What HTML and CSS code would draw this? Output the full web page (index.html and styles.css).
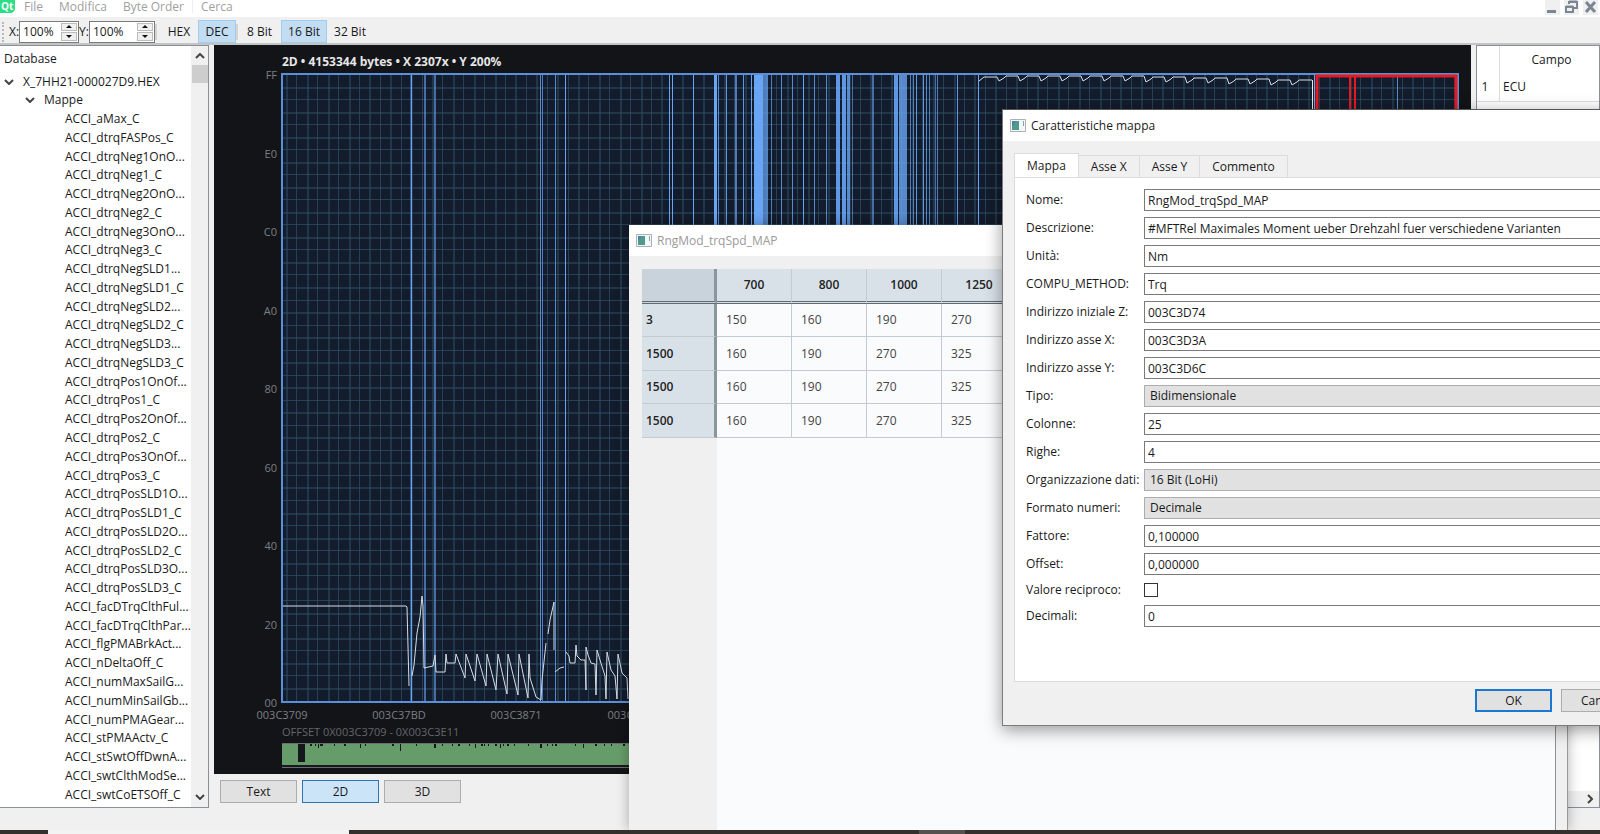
FILE: index.html
```html
<!DOCTYPE html>
<html lang="it">
<head>
  <meta charset="UTF-8">
  <title>X_7HH21-000027D9.HEX</title>
  <link rel="stylesheet" href="styles.css">
</head>
<body>
  <header id="menu-bar">
    <svg class="qt-logo" width="15" height="13" viewBox="0 0 15 13">
      <path d="M0 0h15v10l-3 3H0z" fill="#2cde85"/>
      <text x="1" y="10">Qt</text>
    </svg>
    <nav>
      <a href="#">File</a>
      <a href="#">Modifica</a>
      <a href="#">Byte Order</a>
      <a href="#" class="last">Cerca</a>
    </nav>
    <div class="window-buttons">
      <button aria-label="Minimize"><svg width="15" height="15" viewBox="0 0 15 15"><path d="M2 11.500h9" stroke="#7b8794" stroke-width="3"/></svg></button>
      <button aria-label="Restore"><svg width="15" height="15" viewBox="0 0 15 15"><path d="M5 4V2h8v6h-3M5 1.500h8M2 7h7v5H2zM2 6.500h7" fill="none" stroke="#7b8794" stroke-width="2"/></svg></button>
      <button aria-label="Close"><svg width="15" height="15" viewBox="0 0 15 15"><path d="M3 2l9 10M12 2L3 12" stroke="#7b8794" stroke-width="3"/></svg></button>
    </div>
  </header>

  <div id="toolbar">
    <span class="grip"></span>
    <label for="zoom-x">X:</label>
    <div class="spin">
      <input type="text" id="zoom-x" value="100%">
      <div class="spin-buttons"><button class="up" aria-label="X up"></button><button class="down" aria-label="X down"></button></div>
    </div>
    <label for="zoom-y">Y:</label>
    <div class="spin wide">
      <input type="text" id="zoom-y" value="100%">
      <div class="spin-buttons"><button class="up" aria-label="Y up"></button><button class="down" aria-label="Y down"></button></div>
    </div>
    <span class="sep first"></span>
    <button>HEX</button>
    <button class="active">DEC</button>
    <span class="sep"></span>
    <button class="bits">8 Bit</button>
    <button class="active wide">16 Bit</button>
    <button>32 Bit</button>
  </div>

  <main id="workspace">
    <aside id="tree-pane">
      <div class="tree">
        <div class="tree-title">Database</div>
        <div class="node root"><svg width="10" height="6" viewBox="0 0 10 6"><path d="M1 1l4 4 4-4"/></svg>X_7HH21-000027D9.HEX</div>
        <div class="node group"><svg width="10" height="6" viewBox="0 0 10 6"><path d="M1 1l4 4 4-4"/></svg>Mappe</div>
        <ul id="map-list"></ul>
      </div>
      <div class="scrollbar">
        <svg width="10" height="6" viewBox="0 0 10 6"><path d="M1 5l4-4 4 4"/></svg>
        <span class="thumb"></span>
        <svg class="end" width="10" height="6" viewBox="0 0 10 6"><path d="M1 1l4 4 4-4"/></svg>
      </div>
    </aside>

    <section id="center-pane">
      <div class="chart-box"><svg id="chart"></svg></div>
      <div class="view-buttons">
        <button>Text</button>
        <button class="active">2D</button>
        <button>3D</button>
      </div>
    </section>

    <aside id="field-pane">
      <table>
        <thead><tr><th></th><th>Campo</th></tr></thead>
        <tbody><tr><td class="num">1</td><td>ECU</td></tr></tbody>
      </table>
      <div class="hscroll"><svg width="6" height="10" viewBox="0 0 6 10"><path d="M1 1l4 4-4 4"/></svg></div>
    </aside>
  </main>

  <footer id="taskbar"><span class="task-search"></span><span class="task-active"></span></footer>

  <!-- Map table window -->
  <section id="map-window" class="window">
    <div class="title-bar">
      <svg width="16" height="13" viewBox="0 0 16 13"><path d="M.5.5h15v12H.5z" fill="#f4f6f7" stroke="#aab2b8"/><path d="M2 2h7v9H2z" fill="#4f9a8c"/><path d="M2 2h4l-4 5z" fill="#4e7fa8"/><path d="M13 2h1v5h-1z" fill="#6fb0a0"/></svg>
      RngMod_trqSpd_MAP
    </div>
    <div class="map-body">
      <table class="map-table">
        <thead><tr><th></th><th>700</th><th>800</th><th>1000</th><th>1250</th></tr></thead>
        <tbody>
          <tr><th>3</th><td>150</td><td>160</td><td>190</td><td>270</td></tr>
          <tr><th>1500</th><td>160</td><td>190</td><td>270</td><td>325</td></tr>
          <tr><th>1500</th><td>160</td><td>190</td><td>270</td><td>325</td></tr>
          <tr><th>1500</th><td>160</td><td>190</td><td>270</td><td>325</td></tr>
        </tbody>
      </table>
    </div>
  </section>

  <!-- Map properties dialog -->
  <section id="props-window" class="window">
    <div class="title-bar">
      <svg width="16" height="13" viewBox="0 0 16 13"><path d="M.5.5h15v12H.5z" fill="#f4f6f7" stroke="#aab2b8"/><path d="M2 2h7v9H2z" fill="#4f9a8c"/><path d="M2 2h4l-4 5z" fill="#4e7fa8"/><path d="M13 2h1v5h-1z" fill="#6fb0a0"/></svg>
      Caratteristiche mappa
    </div>
    <div class="tabs">
      <button class="active">Mappa</button>
      <button>Asse X</button>
      <button>Asse Y</button>
      <button>Commento</button>
    </div>
    <form class="props-form">
      <label for="nome">Nome:</label><input type="text" id="nome" value="RngMod_trqSpd_MAP">
      <label for="descrizione">Descrizione:</label><input type="text" id="descrizione" value="#MFTRel Maximales Moment ueber Drehzahl fuer verschiedene Varianten">
      <label for="unita">Unità:</label><input type="text" id="unita" value="Nm">
      <label for="compu">COMPU_METHOD:</label><input type="text" id="compu" value="Trq">
      <label for="addr-z">Indirizzo iniziale Z:</label><input type="text" id="addr-z" value="003C3D74">
      <label for="addr-x">Indirizzo asse X:</label><input type="text" id="addr-x" value="003C3D3A">
      <label for="addr-y">Indirizzo asse Y:</label><input type="text" id="addr-y" value="003C3D6C">
      <label for="tipo">Tipo:</label><select id="tipo"><option>Bidimensionale</option></select>
      <label for="colonne">Colonne:</label><input type="text" id="colonne" value="25">
      <label for="righe">Righe:</label><input type="text" id="righe" value="4">
      <label for="org">Organizzazione dati:</label><select id="org"><option>16 Bit (LoHi)</option></select>
      <label for="formato">Formato numeri:</label><select id="formato"><option>Decimale</option></select>
      <label for="fattore">Fattore:</label><input type="text" id="fattore" value="0,100000">
      <label for="offset">Offset:</label><input type="text" id="offset" value="0,000000">
      <label for="reciproco">Valore reciproco:</label><input type="checkbox" id="reciproco">
      <label for="decimali">Decimali:</label><input type="text" id="decimali" value="0">
    </form>
    <div class="dialog-buttons">
      <button class="default">OK</button>
      <button>Cancel</button>
    </div>
  </section>

  <script src="chart.js"></script>
</body>
</html>
```
FILE: styles.css
```css
html, body {
  margin: 0;
  padding: 0;
  height: 100%;
}
body {
  display: flex;
  flex-direction: column;
  position: relative;
  overflow: hidden;
  background: #f0f0f0;
  color: #1a1a1a;
  font-family: "Open Sans", "Noto Sans", sans-serif;
  font-size: 12px;
  line-height: 18px;
}
button, input, select {
  font: inherit;
  color: inherit;
  margin: 0;
  box-sizing: border-box;
}
table {
  border-collapse: separate;
  border-spacing: 0;
}

/* Menu bar */
#menu-bar {
  display: flex;
  align-items: flex-start;
  height: 17px;
  background: #fff;
}
.qt-logo text {
  fill: #fff;
  font-size: 10px;
  font-weight: bold;
}
#menu-bar nav {
  display: flex;
  flex: 1;
  padding-left: 1px;
  line-height: 13px;
}
#menu-bar a {
  padding: 0 8px;
  color: #a0a0a0;
  text-decoration: none;
}
#menu-bar a.last {
  border-left: 1px solid #eee;
}
.window-buttons {
  display: flex;
  gap: 4px;
  padding-right: 2px;
}
.window-buttons button {
  width: 15px;
  height: 15px;
  padding: 0;
  border: 0;
  background: #f0f0f0;
}
.window-buttons svg {
  display: block;
}

/* Toolbar */
#toolbar {
  display: flex;
  align-items: center;
  height: 23px;
  padding: 3px 2px 0;
  border-bottom: 2px solid #c4c4c4;
}
.grip {
  width: 2px;
  height: 20px;
  margin-right: 3px;
  border-left: 2px dotted #bbb;
}
.spin {
  display: flex;
  width: 60px;
  height: 22px;
  box-sizing: border-box;
  border: 1px solid #7a7a7a;
  background: #fff;
}
.spin.wide {
  width: 66px;
}
.spin input {
  flex: 1;
  min-width: 0;
  padding: 0 3px;
  border: 0;
  background: none;
}
.spin-buttons {
  display: flex;
  flex-direction: column;
  width: 16px;
  gap: 1px;
  padding: 1px;
}
.spin-buttons button {
  display: flex;
  flex: 1;
  align-items: center;
  justify-content: center;
  padding: 0;
  border: 1px solid #bcbcbc;
  background: #f0f0f0;
}
.spin-buttons button::before {
  content: "";
  border: 3px solid transparent;
}
.spin-buttons .up::before {
  border-top: 0;
  border-bottom-color: #111;
}
.spin-buttons .down::before {
  border-bottom: 0;
  border-top-color: #111;
}
.sep {
  width: 2px;
  height: 16px;
  background: #d4d4d4;
}
.sep.first {
  margin-right: 3px;
}
#toolbar > button {
  min-width: 38px;
  height: 23px;
  padding: 0 6px;
  border: 1px solid transparent;
  background: none;
  white-space: nowrap;
}
#toolbar > button.bits {
  padding: 0 8px;
}
#toolbar > button.active {
  border-color: #9fcdf1;
  background: #c2dcf2;
}
#toolbar > button.wide {
  min-width: 46px;
}

/* Workspace */
#workspace {
  display: flex;
  flex: 1;
  gap: 5px;
  min-height: 0;
}
#tree-pane {
  display: flex;
  width: 209px;
  box-sizing: border-box;
  margin-bottom: 22px;
  border: 1px solid #8a8f99;
  border-left: 0;
  background: #fff;
}
.tree {
  display: flex;
  flex: 1;
  flex-direction: column;
  min-width: 0;
  padding-top: 4px;
}
.tree-title {
  padding-left: 4px;
}
.node {
  display: flex;
  align-items: center;
}
.node.root {
  gap: 9px;
  padding: 5px 0 0 4px;
}
.node.group {
  gap: 9px;
  padding: 0 0 0 25px;
}
#workspace .node svg, .scrollbar svg, .hscroll svg {
  fill: none;
  stroke: #444;
  stroke-width: 2;
}
#map-list {
  display: flex;
  flex: 1;
  flex-direction: column;
  justify-content: space-between;
  margin: 0;
  padding: 1px 0 3px 65px;
  list-style: none;
  white-space: nowrap;
}
.scrollbar {
  display: flex;
  flex-direction: column;
  align-items: center;
  width: 17px;
  padding: 7px 0;
  background: #f0f0f0;
}
.scrollbar .thumb {
  width: 16px;
  height: 18px;
  margin-top: 6px;
  background: #cdcdcd;
}
.scrollbar .end {
  margin-top: auto;
}
#center-pane {
  display: flex;
  flex: 1;
  flex-direction: column;
  min-width: 0;
}
.chart-box {
  flex: 1;
  min-height: 0;
  background: #131417;
}
#chart {
  display: block;
  width: 100%;
  height: 100%;
}
.view-buttons {
  display: flex;
  gap: 5px;
  padding: 6px 5px 27px 6px;
}
.view-buttons button, .dialog-buttons button {
  width: 77px;
  height: 23px;
  padding: 0;
  border: 1px solid #adadad;
  background: #e1e1e1;
}
.view-buttons .active {
  border-color: #2a74b8;
  background: #cce4f7;
}

/* Chart texts and lines */
.chart-title {
  fill: #e6e6e6;
  font-weight: bold;
}
.axis-text {
  fill: #7c7f85;
  font-size: 11px;
}
.axis-text.y {
  text-anchor: end;
}
.axis-text.x {
  text-anchor: middle;
}
.axis-text.offset {
  fill: #63666c;
}
.wave {
  fill: none;
  stroke: #d5dde6;
}

/* Field pane */
#field-pane {
  display: flex;
  flex-direction: column;
  justify-content: space-between;
  width: 124px;
  box-sizing: border-box;
  margin-bottom: 22px;
  border: 1px solid #8a8f99;
  background: #fff;
}
#field-pane table {
  width: 100%;
}
#field-pane th {
  height: 27px;
  padding: 0;
  font-weight: normal;
}
#field-pane th:last-child {
  padding-left: 4px;
}
#field-pane td {
  height: 28px;
  padding: 0 3px;
  border-bottom: 1px solid #dcdcdc;
}
#field-pane th:first-child, #field-pane td.num {
  width: 22px;
  padding: 0;
  border-right: 1px solid #dcdcdc;
  text-align: center;
}
#field-pane td.num {
  padding-right: 6px;
  width: 16px;
}
.hscroll {
  display: flex;
  align-items: center;
  justify-content: flex-end;
  height: 16px;
  padding-right: 6px;
  background: #f0f0f0;
}

/* Taskbar */
#taskbar {
  display: flex;
  height: 4px;
  padding-left: 48px;
  background: #33302e;
}
.task-search {
  width: 301px;
  background: #f3f3f3;
}
.task-active {
  width: 46px;
  margin-left: 570px;
  background: #55524f;
}

/* Windows */
.window {
  position: absolute;
  display: flex;
  flex-direction: column;
  box-sizing: border-box;
  background: #f0f0f0;
}
.title-bar {
  display: flex;
  align-items: center;
  gap: 5px;
  height: 31px;
  padding-left: 7px;
  background: #fff;
}
#map-window {
  left: 629px;
  top: 225px;
  bottom: 4px;
  width: 939px;
  border-right: 1px solid #9a9a9a;
  box-shadow: 0 0 12px rgba(0, 0, 0, 0.3);
  clip-path: inset(-20px -20px 0 -20px);
}
#map-window .title-bar {
  color: #999;
}
.map-body {
  flex: 1;
  margin: 13px 11px 0 13px;
  border-right: 1px solid #8a8f99;
  background: linear-gradient(90deg, #f0f0f0 75px, #fafbfd 75px);
}
.map-table {
  table-layout: fixed;
  width: 375px;
}
.map-table th, .map-table td {
  height: 33px;
  box-sizing: border-box;
  padding: 0 9px;
  border-right: 1px solid #c4cad1;
  border-bottom: 1px solid #c4cad1;
  background: #fafbfd;
  color: #444;
  text-align: left;
}
.map-table tbody tr:nth-child(even) > * {
  height: 34px;
}
.map-table th {
  padding: 0 4px;
  background: #d9e1e8;
  color: #222;
  font-weight: 600;
}
.map-table thead th {
  height: 35px;
  border-bottom: 3px double #5f6b73;
  text-align: center;
}
.map-table tr th:first-child {
  border-right: 3px solid #8b959d;
}
.map-table thead th:first-child {
  background: #c8d3db;
}

#props-window {
  left: 1002px;
  top: 109px;
  width: 646px;
  border: 1px solid #7c7c7c;
  border-top-color: #555;
  box-shadow: 0 4px 16px rgba(0, 0, 0, 0.4);
}
.tabs {
  display: flex;
  align-items: flex-end;
  margin: 12px 0 0 11px;
}
.tabs button {
  height: 22px;
  padding: 0 12px;
  border: 1px solid #dcdcdc;
  border-bottom: 0;
  border-left: 0;
  background: #f0f0f0;
}
.tabs button.active {
  height: 24px;
  border-left: 1px solid #dcdcdc;
  background: #fff;
}
.props-form {
  display: grid;
  grid-template-columns: 112px 1fr;
  align-items: center;
  gap: 6px;
  margin: 0 10px 0 11px;
  padding: 11px 11px 54px;
  border: 1px solid #dcdcdc;
  background: #fff;
}
.props-form label {
  white-space: nowrap;
}
.props-form input[type="text"], .props-form select {
  width: 100%;
  height: 22px;
  padding: 0 3px;
  border: 1px solid #7a7a7a;
  border-radius: 0;
  background: #fff;
}
.props-form select {
  appearance: none;
  padding: 0 5px;
  border-color: #adadad;
  background: #e1e1e1;
}
.props-form input[type="checkbox"] {
  appearance: none;
  width: 14px;
  height: 14px;
  border: 1px solid #333;
  background: #fff;
}
.dialog-buttons {
  display: flex;
  justify-content: flex-end;
  gap: 9px;
  padding: 7px 9px 13px;
}
.dialog-buttons .default {
  border: 2px solid #1a78d2;
}
```
FILE: chart.js
```js
const mapNames = [
  "ACCI_aMax_C", "ACCI_dtrqFASPos_C", "ACCI_dtrqNeg1OnO...", "ACCI_dtrqNeg1_C",
  "ACCI_dtrqNeg2OnO...", "ACCI_dtrqNeg2_C", "ACCI_dtrqNeg3OnO...", "ACCI_dtrqNeg3_C",
  "ACCI_dtrqNegSLD1...", "ACCI_dtrqNegSLD1_C", "ACCI_dtrqNegSLD2...", "ACCI_dtrqNegSLD2_C",
  "ACCI_dtrqNegSLD3...", "ACCI_dtrqNegSLD3_C", "ACCI_dtrqPos1OnOf...", "ACCI_dtrqPos1_C",
  "ACCI_dtrqPos2OnOf...", "ACCI_dtrqPos2_C", "ACCI_dtrqPos3OnOf...", "ACCI_dtrqPos3_C",
  "ACCI_dtrqPosSLD1O...", "ACCI_dtrqPosSLD1_C", "ACCI_dtrqPosSLD2O...", "ACCI_dtrqPosSLD2_C",
  "ACCI_dtrqPosSLD3O...", "ACCI_dtrqPosSLD3_C", "ACCI_facDTrqClthFul...", "ACCI_facDTrqClthPar...",
  "ACCI_flgPMABrkAct...", "ACCI_nDeltaOff_C", "ACCI_numMaxSailG...", "ACCI_numMinSailGb...",
  "ACCI_numPMAGear...", "ACCI_stPMAActv_C", "ACCI_stSwtOffDwnA...", "ACCI_swtClthModSe...",
  "ACCI_swtCoETSOff_C"
];

const listEl = document.getElementById("map-list");
mapNames.forEach(name => {
  const li = document.createElement("li");
  li.textContent = name;
  listEl.appendChild(li);
});

// Plot area inside the chart
const plot = { x: 68, y: 29, w: 1176, h: 628 };
let out = "";

function rect(x, y, w, h, fill, opacity = 1) {
  out += `<rect x="${x}" y="${y}" width="${w}" height="${h}" fill="${fill}" opacity="${opacity}"/>`;
}

function text(x, y, cls, value) {
  out += `<text x="${x}" y="${y}" class="${cls}">${value}</text>`;
}

text(plot.x, 21, "chart-title", "2D • 4153344 bytes • X 2307x • Y 200%");
["FF", "E0", "C0", "A0", "80", "60", "40", "20", "00"].forEach((v, i) => {
  text(63, Math.round(34 + i * plot.h / 8), "axis-text y", v);
});
["003C3709", "003C37BD", "003C3871", "003C3925"].forEach((v, i) => {
  text(68 + i * 117, 674, "axis-text x", v);
});
text(plot.x, 691, "axis-text offset", "OFFSET 0X003C3709 - 0X003C3E11");

out += `<g transform="translate(${plot.x} ${plot.y})">`;
rect(0, 0, plot.w, plot.h, "#131c2c");

// Grid
for (let i = 0; i * 10.43 + 4 < plot.w; i++) {
  rect(Math.round(4 + i * 10.43), 0, i % 2 ? 1 : 2, plot.h, "#305064", i % 2 ? 0.7 : 0.5);
}
for (let i = 1; i < 50; i++) {
  rect(0, Math.round(i * 12.53), plot.w, i % 2 ? 2 : 1, "#305064", i % 2 ? 0.5 : 0.7);
}

// Full height value jumps: x, width, opacity
const jumps = [
  [128, 1, 0.4], [129, 1, 1], [142, 2, 0.6], [152, 2, 0.6], [258, 1, 0.8], [260, 1, 0.7],
  [273, 1, 0.8], [283, 1, 1], [387, 1, 1], [390, 1, 1], [411, 1, 1], [432, 3, 1],
  [436, 1, 0.8], [444, 1, 0.9], [453, 2, 0.7], [461, 1, 0.9], [469, 1, 1], [472, 9, 1],
  [481, 5, 0.7], [489, 1, 0.7], [499, 1, 0.8], [510, 1, 0.8], [521, 1, 1], [532, 1, 0.8],
  [544, 1, 0.8], [554, 4, 0.9], [560, 4, 0.9], [565, 3, 0.8], [570, 1, 0.6], [590, 2, 0.6],
  [612, 4, 0.9], [617, 8, 0.8], [628, 1, 0.7], [631, 1, 0.7], [634, 1, 0.9], [641, 1, 0.9],
  [644, 1, 0.8], [647, 1, 0.7], [653, 1, 0.6], [655, 1, 0.7], [675, 1, 0.9], [696, 1, 1],
  [1032, 1, 1], [1115, 1, 0.8]
];
jumps.forEach(([x, w, o]) => rect(x, 0, w, plot.h, "#69a5f5", o));
rect(1030, 6, 1, plot.h - 6, "#e4e9ef");
out += `<rect x="0" y="0" width="${plot.w}" height="${plot.h}" fill="none" stroke="#5b8fd9" stroke-width="2"/>`;

// Low signal
out += `<path class="wave" d="M1 532H124L125 533 127 612M130 602L132 591 135 559 138 543 140 522 141 532
  142 594 151 592 153 581 154 598 163 598 164 580 165 589 173 589 174 580 183 604 184 580 193 607
  195 580 204 612 205 580 214 616 216 580 225 620 226 580 236 621 237 580 246 624 247 580 248 604
  254 623 259 626 260 606 264 569M266 560L268 546 272 528V576M273 598L278 594 282 593M284 578L287 582
  288 589 293 589 294 571 295 582 299 586 303 586 304 616V573L306 581 309 589 313 590 314 621
  315 576 318 586 323 602 324 625 325 578 329 596 333 602 335 625 336 580 340 599 345 604 346 625"/>`;

// High signal, small dips every 21px
let d = "M697 7L702 3";
for (let i = 0; i < 15; i++) {
  const x = Math.round(715 + i * 20.93);
  const top = 2 + Math.round(Math.max(0, i - 6) / 2);
  d += `H${x}L${x + 2} ${top + 5} ${x + 7} ${top + 2} ${x + 9} ${top}`;
}
out += `<path class="wave" d="${d}H1030"/>`;

// Selected map
out += `<rect x="1035" y="2" width="139" height="${plot.h - 4}" fill="none" stroke="#e8191f" stroke-width="3"/>`;
rect(1067, 2, 2, plot.h - 4, "#e8191f");
rect(1072, 2, 2, plot.h - 4, "#e8191f");
out += "</g>";

// Overview strip
out += `<g transform="translate(${plot.x} 698)">`;
rect(0, 0, plot.w, 25, "#17191d");
rect(0, 1, plot.w, 21, "#669c6a");
rect(0, 0, plot.w, 1, "#6a6d72");
rect(0, 24, plot.w, 1, "#6a6d72");
rect(16, 1, 7, 18, "#15171b");
[28, 33, 36, 38, 40, 52, 62, 78, 83, 110, 118, 134, 152, 160, 170, 176, 187, 193, 199,
  202, 206, 213, 218, 221, 225, 232, 246, 258, 265, 270, 273, 293, 301, 313, 322, 329, 341
].forEach((x, i) => rect(x, 1, i % 3 ? 1 : 2, i % 5 === 2 ? 4 : 2, "#15171b"));
rect(118, 1, 1, 7, "#15171b");
out += "</g>";

document.getElementById("chart").innerHTML = out;
```
